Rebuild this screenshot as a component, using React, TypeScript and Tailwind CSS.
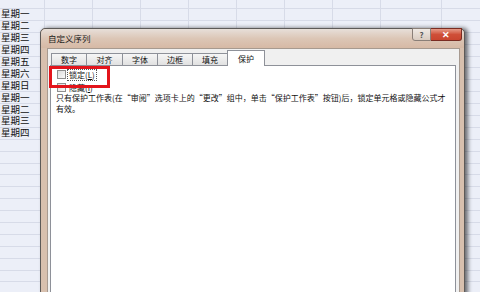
import React from "react"

const days = ["星期一", "星期二", "星期三", "星期四", "星期五", "星期六", "星期日", "星期一", "星期二", "星期三", "星期四"]
const colWidths = ["w-[45px]", "w-[48px]", "w-[48px]", "w-[48px]", "w-[48px]", "w-[48px]", "w-[48px]", "w-[48px]", "w-[61px]", "w-[40px]"]
const tabs = [
    { label: "数字", w: "w-[35px]" },
    { label: "对齐", w: "w-[36px]" },
    { label: "字体", w: "w-[35px]" },
    { label: "边框", w: "w-[35px]" },
    { label: "填充", w: "w-[35px]" },
]

function SheetRow({ label, first }: { label?: string; first?: boolean }) {
    return (
        <div className={`flex border-b border-[#d7dbe8] ${first ? "h-[9px]" : "h-[11.9px]"}`}>
            {colWidths.map((w, i) => (
                <div key={i} className={`${w} shrink-0 border-r border-[#d7dbe8] flex items-center`}>
                    {i === 0 && label ? (
                        <span className="pl-[1px] font-['Liberation_Sans','Noto_Sans_CJK_SC',sans-serif] text-[9.5px] leading-[10px] text-[#111] whitespace-nowrap">{label}</span>
                    ) : null}
                </div>
            ))}
        </div>
    )
}

function Checkbox() {
    return (
        <div className="w-[9px] h-[9px] shrink-0 border border-[#8f8f8f] bg-gradient-to-br from-[#dcdcdc] to-[#fafafa]" />
    )
}

export default function App() {
    const rows: (string | undefined)[] = [...days, ...Array(14).fill(undefined)]

    return (
        <div lang="zh-CN" className="relative w-[480px] h-[292px] overflow-hidden bg-[#eceff8] font-['Noto_Sans_CJK_SC','Noto_Sans',sans-serif]">
            {/* spreadsheet behind */}
            <div className="flex flex-col">
                <SheetRow first />
                {rows.map((r, i) => (
                    <SheetRow key={i} label={r} />
                ))}
            </div>

            {/* dialog window */}
            <div className="absolute left-[40px] top-[28px] w-[425px] h-[272px] rounded-t-[5px] border border-[#5d5a58] bg-[#d8c0ae] shadow-[3px_0_4px_rgba(0,0,0,0.55)] flex flex-col">
                <div className="relative h-[19px] shrink-0 rounded-t-[5px] bg-gradient-to-b from-[#e7dfd9] via-[#dcc6b6] to-[#d6b9a5] flex items-center pl-[7px]">
                    <span className="text-[8.5px] leading-none text-[#1a1a1a]">自定义序列</span>
                    <div className="absolute top-[-1px] right-[2px] flex">
                        <div className="w-[19px] h-[13px] border border-[#8a7f78] rounded-bl-[3px] bg-gradient-to-b from-[#efe9e4] to-[#d9cbc0] flex items-center justify-center text-[8px] leading-none text-[#555] font-bold">?</div>
                        <div className="w-[31px] h-[13px] border border-l-0 border-[#7a2c22] rounded-br-[3px] bg-gradient-to-b from-[#e59a88] via-[#cf4f38] to-[#c9452f] flex items-center justify-center text-[9px] leading-none text-white font-bold">✕</div>
                    </div>
                </div>

                <div className="flex-1 ml-[6px] mr-[4px] border border-[#a79a90] bg-[#f0f0f0] pt-[1px] pl-[2px] pr-[3px] flex flex-col">
                    <div className="flex items-end h-[16px] pl-[1px] -mb-px relative z-10">
                        {tabs.map((t) => (
                            <div key={t.label} className={`${t.w} h-[13px] border border-[#8e9199] border-r-0 bg-gradient-to-b from-[#f6f6f6] to-[#e1e1e1] flex items-center justify-center text-[8px] leading-none text-[#111]`}>
                                {t.label}
                            </div>
                        ))}
                        <div className="w-[38px] h-[16px] border border-[#8e9199] border-b-0 bg-white flex items-center justify-center text-[8px] leading-none text-[#111]">
                            保护
                        </div>
                    </div>

                    <div className="flex-1 border border-[#8e9199] bg-white pt-[4px] pl-[6px] text-[8px] leading-none text-[#111]">
                        <div className="flex items-center h-[9px]">
                            <Checkbox />
                            <span className="ml-[2px] px-[1px] py-[1px] outline outline-1 outline-dotted outline-[#555]">
                                锁定(<span className="underline">L</span>)
                            </span>
                        </div>
                        <div className="flex items-center h-[9px] mt-[4px]">
                            <Checkbox />
                            <span className="ml-[3px]">
                                隐藏(<span className="underline">I</span>)
                            </span>
                        </div>
                        <p className="-ml-[1px] leading-[11px] whitespace-nowrap">
                            只有保护工作表(在“审阅”选项卡上的“更改”组中，单击“保护工作表”按钮)后，锁定单元格或隐藏公式才
                            <br />
                            有效。
                        </p>
                    </div>
                </div>
            </div>

            {/* red annotation box */}
            <div className="absolute left-[49px] top-[66px] w-[61px] h-[22px] border-[3px] border-[#e3141b]" />
        </div>
    )
}
